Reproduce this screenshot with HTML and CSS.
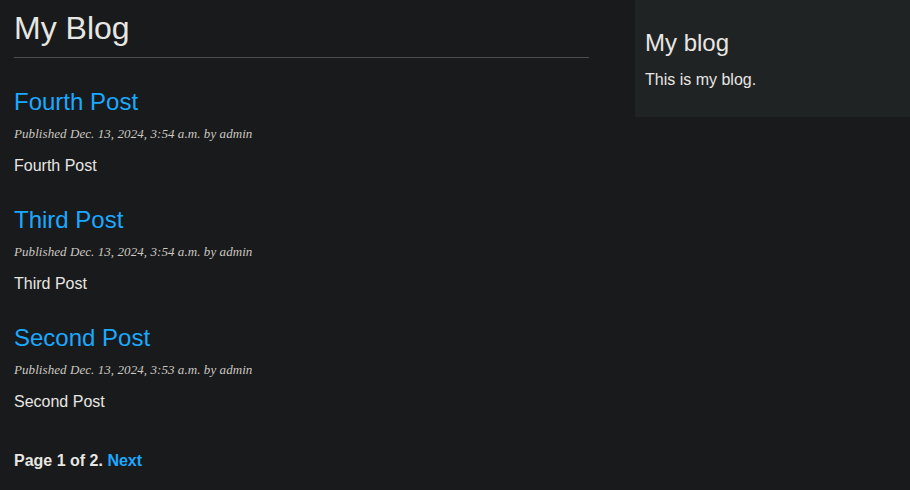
FILE: index.html
```html
<!DOCTYPE html>
<html lang="en">
<head>
<meta charset="utf-8">
<title>My Blog</title>
<link rel="stylesheet" href="styles.css">
</head>
<body>
<div class="page">
  <main class="content">
    <h1 class="site-title">My Blog</h1>
    <article class="post">
      <h2 class="post-title"><a href="#">Fourth Post</a></h2>
      <p class="date">Published Dec. 13, 2024, 3:54 a.m. by admin</p>
      <p class="body">Fourth Post</p>
    </article>
    <article class="post">
      <h2 class="post-title"><a href="#">Third Post</a></h2>
      <p class="date">Published Dec. 13, 2024, 3:54 a.m. by admin</p>
      <p class="body">Third Post</p>
    </article>
    <article class="post">
      <h2 class="post-title"><a href="#">Second Post</a></h2>
      <p class="date">Published Dec. 13, 2024, 3:53 a.m. by admin</p>
      <p class="body">Second Post</p>
    </article>
    <div class="pagination">
      <span class="current">Page 1 of 2.</span>
      <a href="#">Next</a>
    </div>
  </main>
  <aside class="sidebar">
    <h2 class="sidebar-title">My blog</h2>
    <p class="sidebar-text">This is my blog.</p>
  </aside>
</div>
</body>
</html>
```
FILE: styles.css
```css
html, body {
  margin: 0;
  padding: 0;
  background: #181a1b;
}
body {
  font-family: "Liberation Sans", Arial, sans-serif;
  color: #e8e6e3;
}
a {
  color: #1ba9ff;
  text-decoration: none;
}
.page {
  display: flex;
  align-items: flex-start;
}
.content {
  width: 575px;
  padding-left: 14px;
}
.site-title {
  margin: 10px 0 0;
  font-size: 32px;
  line-height: 37px;
  font-weight: normal;
  padding-bottom: 10px;
  border-bottom: 1px solid #4b4f52;
}
.post {
  display: flex;
  flex-direction: column;
  margin-top: 30px;
}
.post + .post {
  margin-top: 31px;
}
.post-title {
  margin: 0;
  font-size: 24px;
  line-height: 28px;
  font-weight: normal;
}
.date {
  margin: 10px 0 0;
  font-family: "Liberation Serif", Georgia, serif;
  font-style: italic;
  font-size: 13px;
  line-height: 15px;
  letter-spacing: 0.07px;
  color: #cdc8c2;
}
.body {
  margin: 16px 0 0;
  font-size: 16px;
  line-height: 18px;
}
.pagination {
  margin-top: 41px;
  font-size: 16px;
  line-height: 18px;
  font-weight: bold;
}
.sidebar {
  margin-left: auto;
  width: 275px;
  box-sizing: border-box;
  padding: 29px 10px 28px;
  background: #202324;
}
.sidebar-title {
  margin: 0;
  font-size: 24px;
  line-height: 28px;
  font-weight: normal;
}
.sidebar-text {
  margin: 14px 0 0;
  font-size: 16px;
  line-height: 18px;
}
```
